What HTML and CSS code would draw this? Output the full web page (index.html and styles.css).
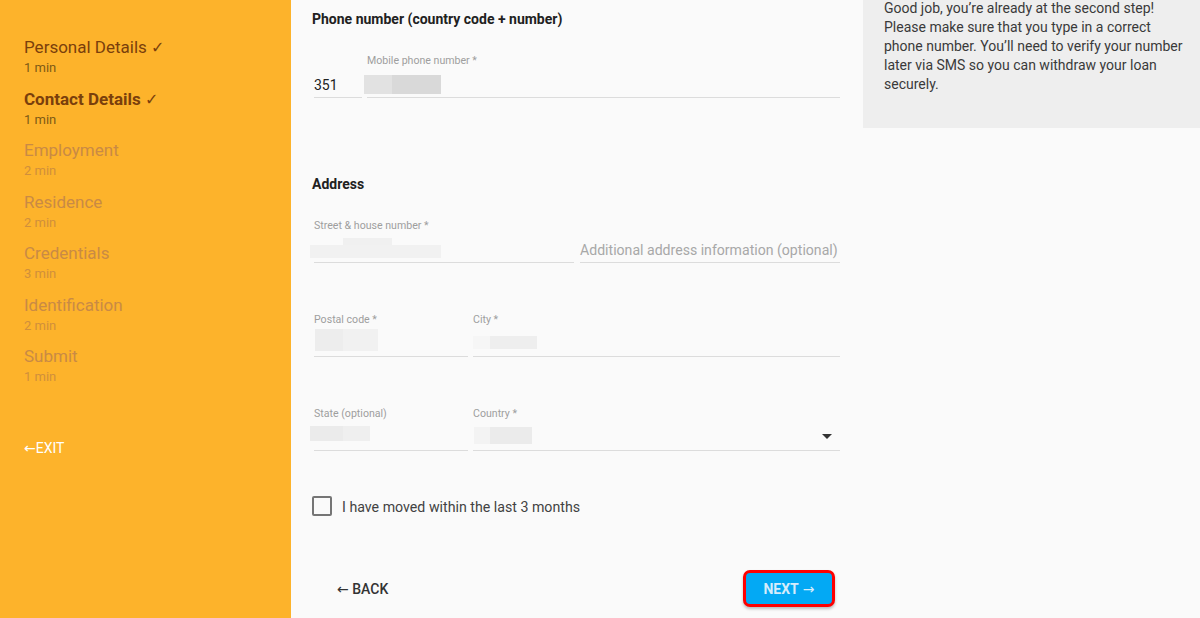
FILE: index.html
```html
<!DOCTYPE html>
<html>
<head>
<meta charset="utf-8">
<link rel="stylesheet" href="styles.css">
</head>
<body>
<div class="app">
  <nav class="sidebar">
    <div class="step done"><div class="step-title">Personal Details <span class="tick">✓</span></div><div class="step-time">1 min</div></div>
    <div class="step done current"><div class="step-title">Contact Details <span class="tick">✓</span></div><div class="step-time">1 min</div></div>
    <div class="step"><div class="step-title">Employment</div><div class="step-time">2 min</div></div>
    <div class="step"><div class="step-title">Residence</div><div class="step-time">2 min</div></div>
    <div class="step"><div class="step-title">Credentials</div><div class="step-time">3 min</div></div>
    <div class="step"><div class="step-title">Identification</div><div class="step-time">2 min</div></div>
    <div class="step"><div class="step-title">Submit</div><div class="step-time">1 min</div></div>
    <div class="exit"><span class="arrow">←</span>EXIT</div>
  </nav>

  <main class="main">
    <h2 class="section-title">Phone number (country code + number)</h2>
    <div class="row row-phone">
      <div class="field field-cc">
        <div class="label"></div>
        <div class="value"><span class="text">351</span></div>
      </div>
      <div class="field field-grow">
        <div class="label">Mobile phone number *</div>
        <div class="value"><span class="redact r-phone"></span></div>
      </div>
    </div>

    <h2 class="section-title section-address">Address</h2>
    <div class="row row-street">
      <div class="field field-half">
        <div class="label">Street &amp; house number *</div>
        <div class="value"><span class="redact r-street"></span></div>
      </div>
      <div class="field field-half">
        <div class="label"></div>
        <div class="value"><span class="placeholder">Additional address information (optional)</span></div>
      </div>
    </div>

    <div class="row row-gap">
      <div class="field field-small">
        <div class="label">Postal code *</div>
        <div class="value"><span class="redact r-postal"></span></div>
      </div>
      <div class="field field-grow">
        <div class="label">City *</div>
        <div class="value"><span class="redact r-city"></span></div>
      </div>
    </div>

    <div class="row row-gap">
      <div class="field field-small">
        <div class="label">State (optional)</div>
        <div class="value"><span class="redact r-state"></span></div>
      </div>
      <div class="field field-grow">
        <div class="label">Country *</div>
        <div class="value"><span class="redact r-country"></span><span class="caret"></span></div>
      </div>
    </div>

    <label class="check-row">
      <span class="checkbox"></span>
      <span class="check-label">I have moved within the last 3 months</span>
    </label>

    <div class="actions">
      <span class="btn-back"><span class="arrow">←</span> BACK</span>
      <span class="btn-next">NEXT <span class="arrow">→</span></span>
    </div>
  </main>

  <aside class="info">
    <p class="info-text">Good job, you’re already at the second step! Please make sure that you type in a correct phone number. You’ll need to verify your number later via SMS so you can withdraw your loan securely.</p>
  </aside>
</div>
</body>
</html>
```

FILE: styles.css
```css
* { box-sizing: border-box; }
html, body {
  margin: 0;
  padding: 0;
  height: 100%;
  overflow: hidden;
  font-family: Roboto, "Liberation Sans", sans-serif;
  background: #fafafa;
}
.app {
  display: flex;
  width: 1200px;
  height: 618px;
}
.arrow {
  font-family: "DejaVu Sans", sans-serif;
  font-weight: 400;
}

/* Sidebar */
.sidebar {
  width: 291px;
  flex: none;
  background: #fdb32b;
  padding: 36px 0 0 24px;
}
.step {
  margin-bottom: 11.5px;
}
.step-title {
  height: 22px;
  font-size: 17px;
  line-height: 22px;
  color: #c98a45;
}
.tick {
  font-family: "DejaVu Sans", sans-serif;
  font-weight: 400;
  font-size: 16px;
  line-height: 0;
}
.step-time {
  height: 18px;
  padding-top: 1px;
  font-size: 13px;
  line-height: 17px;
  color: #d08f3c;
}
.step.done .step-title { color: #7a3f0c; }
.step.done .step-time { color: #7e5a16; }
.step.current .step-title { font-weight: 700; }
.exit {
  margin-top: 54px;
  font-size: 14px;
  line-height: 18px;
  color: #ffffff;
}

/* Main form */
.main {
  width: 572px;
  flex: none;
  padding: 11px 23px 0 21px;
}
.section-title {
  margin: 0;
  font-size: 14px;
  line-height: 16px;
  font-weight: 700;
  color: #212121;
}
.section-address { margin-top: 78px; }
.row {
  display: flex;
  margin-left: 2px;
  gap: 5px;
}
.row-phone { margin-top: 26px; }
.row-street { margin-top: 26px; gap: 6px; }
.row-gap { margin-top: 49px; }
.field {
  display: flex;
  flex-direction: column;
}
.field-cc { width: 48px; flex: none; }
.field-grow { flex: 1; }
.field-half { flex: 1; }
.field-small { width: 154px; flex: none; }
.label {
  height: 14px;
  padding-top: 1px;
  font-size: 10.6px;
  line-height: 14px;
  color: #9e9e9e;
}
.value {
  height: 31px;
  border-bottom: 1px solid #dcdcdc;
  display: flex;
  align-items: flex-end;
  padding-bottom: 4px;
}
.text {
  font-size: 14px;
  line-height: 16px;
  color: #222;
}
.placeholder {
  font-size: 14.1px;
  line-height: 16px;
  margin-bottom: 0;
  color: #a8a8a8;
}
.redact { display: inline-block; }
.r-phone {
  width: 77px; height: 19px;
  margin-left: -3px; margin-bottom: -1px;
  background: linear-gradient(90deg, #e2e2e2 0 28px, #d9d9d9 28px);
}
.r-street {
  width: 131px; height: 20px;
  margin-left: -4px; margin-bottom: 0;
  background: linear-gradient(180deg, transparent 0 7px, #f1f1f1 7px), linear-gradient(90deg, transparent 0 33px, #f0f0f0 33px 82px, transparent 82px);
}
.r-postal {
  width: 63px; height: 22px;
  margin-left: 1px; margin-bottom: 1px;
  background: linear-gradient(90deg, #ededed 0 28px, #f1f1f1 28px);
}
.r-city {
  width: 64px; height: 13px;
  margin-left: 0; margin-bottom: 3px;
  background: linear-gradient(90deg, #f6f6f6 0 17px, #eeeeee 17px);
}
.r-state {
  width: 60px; height: 15px;
  margin-left: -4px; margin-bottom: 5px;
  background: linear-gradient(90deg, #ebebeb 0 33px, #efefef 33px);
}
.r-country {
  width: 58px; height: 17px;
  margin-left: 1px; margin-bottom: 2px;
  background: linear-gradient(90deg, #f3f3f3 0 16px, #ebebeb 16px);
}
.caret {
  margin-left: auto;
  margin-right: 8px;
  margin-bottom: 7px;
  width: 0; height: 0;
  border-left: 5px solid transparent;
  border-right: 5px solid transparent;
  border-top: 5px solid #333;
}

.check-row {
  margin-top: 45px;
  display: flex;
  align-items: center;
  gap: 10px;
  height: 20px;
}
.checkbox {
  width: 20px; height: 20px;
  border: 2px solid #757575;
  border-radius: 2px;
}
.check-label {
  padding-top: 2px;
  font-size: 14.2px;
  line-height: 18px;
  color: #424242;
}

.actions {
  margin-top: 54px;
  margin-left: 2px;
  margin-right: 5px;
  display: flex;
  justify-content: space-between;
  align-items: center;
  height: 37px;
}
.btn-back {
  margin-left: 23px;
  font-size: 14px;
  font-weight: 500;
  color: #333;
}
.btn-next {
  width: 92px;
  height: 37px;
  border: 3px solid #ff0000;
  border-radius: 7px;
  background: #03a9f4;
  color: #d6ecfb;
  font-size: 14px;
  font-weight: 700;
  display: flex;
  align-items: center;
  justify-content: center;
  gap: 4px;
  box-shadow: 0 2px 3px rgba(0,0,0,0.25);
}

/* Right info panel */
.info {
  flex: 1;
  height: 128px;
  background: #eeeeee;
  padding: 0 10px 0 21px;
}
.info-text {
  margin: -1px 0 0;
  font-size: 14px;
  line-height: 19px;
  color: #3a3a3a;
}
```
